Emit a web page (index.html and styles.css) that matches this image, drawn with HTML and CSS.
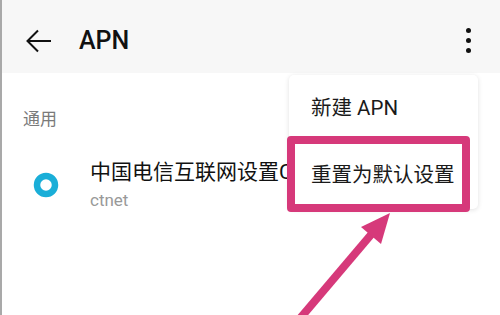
FILE: index.html
```html
<!DOCTYPE html>
<html lang="zh-CN">
<head>
    <meta charset="UTF-8">
    <meta name="viewport" content="width=device-width, initial-scale=1.0">
    <title>APN</title>
    <link rel="stylesheet" href="styles.css">
</head>
<body>
    <div class="screen">
        <div class="topbar">
            <svg class="back" width="26" height="26" viewBox="0 0 26 26">
                <path d="M25 13H2M12 2.5L1.5 13L12 23.5" fill="none" stroke="#111" stroke-width="2"/>
            </svg>
            <div class="title">APN</div>
            <div class="more">
                <span class="dot"></span>
                <span class="dot"></span>
                <span class="dot"></span>
            </div>
        </div>

        <div class="section-label">通用</div>

        <div class="apn-row">
            <svg class="radio" width="26" height="26" viewBox="0 0 26 26">
                <circle cx="13" cy="13" r="9" fill="none" stroke="#1aaed8" stroke-width="6.5"/>
            </svg>
            <div class="apn-text">
                <div class="apn-name">中国电信互联网设置CTNET</div>
                <div class="apn-sub">ctnet</div>
            </div>
        </div>

        <!-- overflow menu -->
        <div class="menu">
            <div class="menu-item">新建 APN</div>
            <div class="menu-item">重置为默认设置</div>
        </div>

        <!-- annotation -->
        <div class="highlight"></div>
        <svg class="pointer" width="500" height="315" viewBox="0 0 500 315">
            <line x1="297" y1="322" x2="375" y2="230" stroke="#d6397a" stroke-width="8"/>
            <polygon points="390,213 381,244 361,227" fill="#d6397a"/>
        </svg>
    </div>
</body>
</html>
```

FILE: styles.css
```css
body {
    margin: 0;
    background: #fff;
    font-family: Roboto, "Noto Sans CJK SC", sans-serif;
}

.screen {
    position: relative;
    width: 498px;
    height: 315px;
    overflow: hidden;
    border-left: 2px solid #a9a9a9;
    background: #fff;
}

.topbar {
    display: flex;
    align-items: center;
    height: 73px;
    padding: 8px 0 0 24px;
    box-sizing: border-box;
    background: #f7f7f7;
}

.back {
    display: block;
}

.title {
    margin-left: 27px;
    font-size: 25px;
    font-weight: 500;
    color: #111;
}

.more {
    display: flex;
    flex-direction: column;
    gap: 5px;
    margin-left: auto;
    margin-right: 29px;
}

.dot {
    width: 5px;
    height: 5px;
    border-radius: 50%;
    background: #111;
}

.section-label {
    padding: 35px 0 0 21px;
    font-size: 17px;
    line-height: 22px;
    color: #7a7a7a;
}

.apn-row {
    display: flex;
    align-items: center;
    padding: 29px 0 0 31px;
}

/* name runs on under the popup menu, so clip it where the menu begins */
.apn-text {
    width: 197px;
    margin-left: 31px;
    overflow: hidden;
    white-space: nowrap;
}

.apn-name {
    font-size: 21px;
    line-height: 26px;
    color: #111;
}

.apn-sub {
    margin-top: 5px;
    font-size: 17px;
    line-height: 20px;
    color: #999;
}

.menu {
    position: absolute;
    top: 75px;
    left: 287px;
    width: 189px;
    background: #fff;
    border-radius: 5px;
    box-shadow: 0 1px 5px rgba(0, 0, 0, 0.12);
}

.menu-item {
    height: 67px;
    line-height: 67px;
    padding-left: 22px;
    font-size: 20.5px;
    color: #1a1a1a;
}

.highlight {
    position: absolute;
    top: 136px;
    left: 285px;
    width: 167px;
    height: 60px;
    border: 8px solid #d6397a;
    border-radius: 4px;
}

.pointer {
    position: absolute;
    top: 0;
    left: -2px;
}
```
